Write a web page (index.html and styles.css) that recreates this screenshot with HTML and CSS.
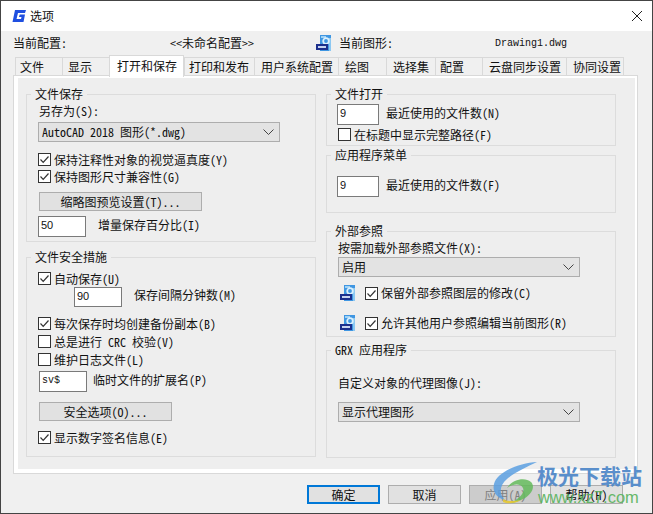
FILE: index.html
```html
<!DOCTYPE html>
<html lang="zh">
<head>
<meta charset="utf-8">
<title>选项</title>
<link rel="stylesheet" href="styles.css">
</head>
<body>
<svg class="defs" width="0" height="0">
  <symbol id="dwg" viewBox="0 0 16 16">
    <rect x="4" y="0" width="11" height="16" fill="#3f96e2"/>
    <rect x="5" y="1" width="5" height="2" fill="#9fd2f5"/>
    <rect x="13" y="3" width="2" height="13" fill="#8cc8f2"/>
    <circle cx="10" cy="6" r="2.800" fill="none" stroke="#dcf0fc" stroke-width="1.800"/>
    <rect x="0" y="9" width="12" height="6" fill="#1c2f8c"/>
    <rect x="2" y="11" width="8" height="2" fill="#c8d4f0"/>
  </symbol>
  <symbol id="tick" viewBox="0 0 11 11">
    <path d="M1.500 5.500 4.200 8.300 9.500 2.500" fill="none" stroke="#333" stroke-width="1.200"/>
  </symbol>
</svg>
<div class="window">
  <header class="titlebar">
    <svg class="logo" width="16" height="16" viewBox="0 0 16 16"><path d="M4 2h11l-1 3H7L5.500 11H10l.5-2H8l.7-2.500h5.300L12.500 14H1.500z" fill="#1f4fe0"/></svg>
    <span class="title">选项</span>
    <svg class="close" width="12" height="12" viewBox="0 0 12 12"><path d="M1 1l10 10M11 1 1 11" stroke="#222" stroke-width="1" fill="none"/></svg>
  </header>
  <div class="profile">
    <span class="profile-label">当前配置:</span>
    <span class="profile-name">&lt;&lt;未命名配置&gt;&gt;</span>
    <svg class="dwg profile-icon"><use href="#dwg"/></svg>
    <span class="drawing-label">当前图形:</span>
    <span class="drawing-name">Drawing1.dwg</span>
  </div>
  <nav class="tabs">
    <span class="tab w47 p4">文件</span>
    <span class="tab w47 p5">显示</span>
    <span class="tab active">打开和保存</span>
    <span class="tab w70 p4">打印和发布</span>
    <span class="tab w84">用户系统配置</span>
    <span class="tab w48">绘图</span>
    <span class="tab w49">选择集</span>
    <span class="tab w47 p4">配置</span>
    <span class="tab w84">云盘同步设置</span>
    <span class="tab w58">协同设置</span>
  </nav>
  <main class="panel">
    <div class="panel-inner">
      <div class="col">
        <fieldset class="group save">
          <legend>文件保存</legend>
          <div class="field-label">另存为(S):</div>
          <div class="select">AutoCAD 2018 图形(*.dwg)<svg class="chev" width="11" height="6" viewBox="0 0 11 6"><path d="M.5.5l5 5 5-5" fill="none" stroke="#444"/></svg></div>
          <label class="check mt11"><span class="box"><svg><use href="#tick"/></svg></span>保持注释性对象的视觉逼真度(Y)</label>
          <label class="check mt4"><span class="box"><svg><use href="#tick"/></svg></span>保持图形尺寸兼容性(G)</label>
          <div class="btn wide mt9">缩略图预览设置(T)...</div>
          <div class="row mt5 gap12"><span class="input">50</span><span class="row-label">增量保存百分比(I)</span></div>
        </fieldset>
        <fieldset class="group safety">
          <legend>文件安全措施</legend>
          <label class="check mt8"><span class="box"><svg><use href="#tick"/></svg></span>自动保存(U)</label>
          <div class="row mt2 gap12 indent"><span class="input short">90</span><span class="row-label">保存间隔分钟数(M)</span></div>
          <label class="check mt10"><span class="box"><svg><use href="#tick"/></svg></span>每次保存时均创建备份副本(B)</label>
          <label class="check mt5"><span class="box"></span>总是进行 CRC 校验(V)</label>
          <label class="check mt5"><span class="box"></span>维护日志文件(L)</label>
          <div class="row mt5 gap6 nudge"><span class="input mono">sv$</span><span class="row-label">临时文件的扩展名(P)</span></div>
          <div class="btn medium mt10">安全选项(O)...</div>
          <label class="check mt10"><span class="box"><svg><use href="#tick"/></svg></span>显示数字签名信息(E)</label>
        </fieldset>
      </div>
      <div class="col">
        <fieldset class="group open">
          <legend>文件打开</legend>
          <div class="row gap7 mt3"><span class="input narrow">9</span><span class="row-label">最近使用的文件数(N)</span></div>
          <label class="check mt3"><span class="box"></span>在标题中显示完整路径(F)</label>
        </fieldset>
        <fieldset class="group menu">
          <legend>应用程序菜单</legend>
          <div class="row gap7 mt14"><span class="input narrow">9</span><span class="row-label">最近使用的文件数(F)</span></div>
        </fieldset>
        <fieldset class="group xref">
          <legend>外部参照</legend>
          <div class="field-label tight">按需加载外部参照文件(X):</div>
          <div class="select">启用<svg class="chev" width="11" height="6" viewBox="0 0 11 6"><path d="M.5.5l5 5 5-5" fill="none" stroke="#444"/></svg></div>
          <div class="row mt8 ref"><svg class="dwg"><use href="#dwg"/></svg><label class="check"><span class="box"><svg><use href="#tick"/></svg></span>保留外部参照图层的修改(C)</label></div>
          <div class="row mt14 ref"><svg class="dwg"><use href="#dwg"/></svg><label class="check"><span class="box"><svg><use href="#tick"/></svg></span>允许其他用户参照编辑当前图形(R)</label></div>
        </fieldset>
        <fieldset class="group grx">
          <legend>GRX 应用程序</legend>
          <div class="field-label grx-label">自定义对象的代理图像(J):</div>
          <div class="select mt12">显示代理图形<svg class="chev" width="11" height="6" viewBox="0 0 11 6"><path d="M.5.5l5 5 5-5" fill="none" stroke="#444"/></svg></div>
        </fieldset>
      </div>
    </div>
  </main>
  <footer class="actions">
    <div class="btn action default">确定</div>
    <div class="btn action">取消</div>
    <div class="btn action disabled">应用(A)</div>
    <div class="btn action">帮助(H)</div>
  </footer>
  <div class="watermark">
    <svg class="swirl" width="44" height="42" viewBox="0 0 44 42">
      <path d="M44 0C26 1 4 10 1 22c-2 8 3 14 11 16C6 32 6 24 14 17 22 10 34 5 44 0z" fill="#5a9fe0" opacity=".85"/>
      <path d="M14 26c6-9 18-11 24-6 5 5 0 14-10 18-3 1-7 3-11 3 9-4 15-10 13-15-3-5-10-4-16 0z" fill="#63b85a" opacity=".85"/>
      <path d="M10 40c4 2 12 2 18-2-6 1-13 2-18-1z" fill="#e6c832" opacity=".9"/>
    </svg>
    <div class="wm-text">
      <div class="wm-cn">极光下载站</div>
      <div class="wm-url">www.xz7.com</div>
    </div>
  </div>
</div>
</body>
</html>
```
FILE: styles.css
```css
* { box-sizing: border-box; }
html, body { margin: 0; padding: 0; }
body {
  width: 653px; height: 514px; overflow: hidden;
  font-family: "Noto Sans Mono CJK SC", "Noto Sans CJK SC", "Liberation Mono", monospace;
  font-size: 12px; line-height: 14px; color: #111; background: #f0f0f0;
}
.defs { position: absolute; }
.window {
  position: relative; width: 653px; height: 514px; display: flex; flex-direction: column;
  border: 1px solid #444; background: #f0f0f0;
}
.titlebar { height: 30px; flex: none; background: #fff; display: flex; align-items: center; padding-left: 10px; }
.logo { flex: none; }
.title { margin-left: 3px; }
.close { margin-left: auto; margin-right: 9px; }
.profile { height: 24px; flex: none; display: flex; align-items: center; padding-left: 12px; }
.profile-label { width: 157px; }
.profile-name { width: 146px; }
.dwg { width: 16px; height: 16px; flex: none; }
.drawing-label { margin-left: 7px; width: 156px; }
.drawing-name { font-family: "Liberation Mono", monospace; font-size: 10px; padding-top: 1px; }
.tabs { display: flex; flex: none; height: 20px; padding-left: 14px; align-items: flex-end; position: relative; z-index: 1; }
.tab {
  height: 18px; padding-left: 6px; line-height: 18px; background: #f0f0f0; white-space: nowrap;
  border: 1px solid #d9d9d9; border-bottom: 0; border-right: 0; flex: none;
}
.tab.p4 { padding-left: 4px; }
.tab.p5 { padding-left: 5px; }
.tab.active { width: 75px; height: 22px; margin-bottom: -2px; background: #fff; border-right: 1px solid #d9d9d9; line-height: 20px; padding-left: 7px; }
.w47 { width: 47px; } .w48 { width: 48px; } .w49 { width: 49px; }
.w58 { width: 58px; border-right: 1px solid #d9d9d9; }
.w70 { width: 70px; } .w84 { width: 84px; }
.panel {
  flex: none; width: 625px; height: 399px; margin: 0 0 0 12px;
  border: 1px solid #d9d9d9; background: #fff; padding: 2px 2px 4px 4px;
}
.panel-inner {
  height: 100%; background: #eee; display: grid; grid-template-columns: 290px 290px; column-gap: 10px;
  padding: 9px 0 0 8px;
}
.col { display: flex; flex-direction: column; }
.group { margin: 0; padding: 0 0 0 11px; border: 1px solid #dcdcdc; min-width: 0; flex: none; }
.group legend { padding: 0 4px; margin-left: -7px; line-height: 14px; }
.save { height: 155px; }
.safety { height: 207px; margin-top: 8px; }
.open { height: 59px; }
.menu { height: 65px; margin-top: 2px; }
.xref { height: 113px; margin-top: 11px; }
.grx { height: 115px; margin-top: 6px; }
.field-label { margin: 3px 0 4px 1px; }
.field-label.tight { margin: 3px 0 2px 0; }
.field-label.grx-label { margin: 19px 0 0 0; }
.select {
  height: 20px; width: 242px; background: #e3e3e3; border: 1px solid #adadad; display: flex; align-items: center;
  justify-content: space-between; padding: 0 5px 0 3px;
}
.chev { flex: none; }
.check { display: flex; align-items: center; height: 13px; white-space: nowrap; }
.box { width: 13px; height: 13px; border: 1px solid #333; background: #fff; margin-right: 3px; flex: none; display: block; }
.box svg { display: block; width: 11px; height: 11px; }
.btn { background: #e1e1e1; border: 1px solid #adadad; display: flex; align-items: center; justify-content: center; height: 19px; }
.wide { width: 163px; margin-left: 1px; }
.medium { width: 133px; margin-left: 1px; }
.row { display: flex; align-items: center; }
.row-label { padding-bottom: 4px; }
.input { width: 48px; height: 21px; background: #fff; border: 1px solid #7a7a7a; padding: 0 2px; line-height: 17px; flex: none; font-family: "Liberation Sans", sans-serif; font-size: 11px; }
.input.short { height: 20px; }
.input.mono { font-family: "Liberation Mono", monospace; font-size: 10px; }
.input.narrow { width: 42px; margin-left: -1px; }
.indent { margin-left: 36px; }
.nudge { margin-left: 1px; }
.ref { padding-left: 2px; gap: 9px; }
.gap12 { gap: 12px; } .gap6 { gap: 6px; } .gap7 { gap: 7px; }
.mt2 { margin-top: 2px; } .mt3 { margin-top: 3px; } .mt4 { margin-top: 4px; } .mt5 { margin-top: 5px; }
.mt8 { margin-top: 8px; } .mt9 { margin-top: 9px; } .mt10 { margin-top: 10px; } .mt11 { margin-top: 11px; }
.mt12 { margin-top: 12px; } .mt14 { margin-top: 14px; }
.actions { flex: none; display: flex; gap: 8px; padding: 11px 0 0 306px; }
.action { width: 73px; height: 19px; }
.default { border: 2px solid #0078d7; }
.disabled { background: #ccc; color: #808080; }
.watermark { position: absolute; left: 492px; top: 461px; display: flex; pointer-events: none; white-space: nowrap; }
.swirl { flex: none; }
.wm-text { display: flex; flex-direction: column; padding-top: 1px; }
.wm-cn { font-family: "Noto Sans CJK SC", sans-serif; font-size: 21px; font-weight: 700; line-height: 24px; color: #4d86c8; opacity: .92; }
.wm-url { font-family: "Liberation Sans", sans-serif; font-size: 16.500px; line-height: 18px; color: #58b35c; margin-top: 1px; padding-left: 1px; opacity: .9; }
```
